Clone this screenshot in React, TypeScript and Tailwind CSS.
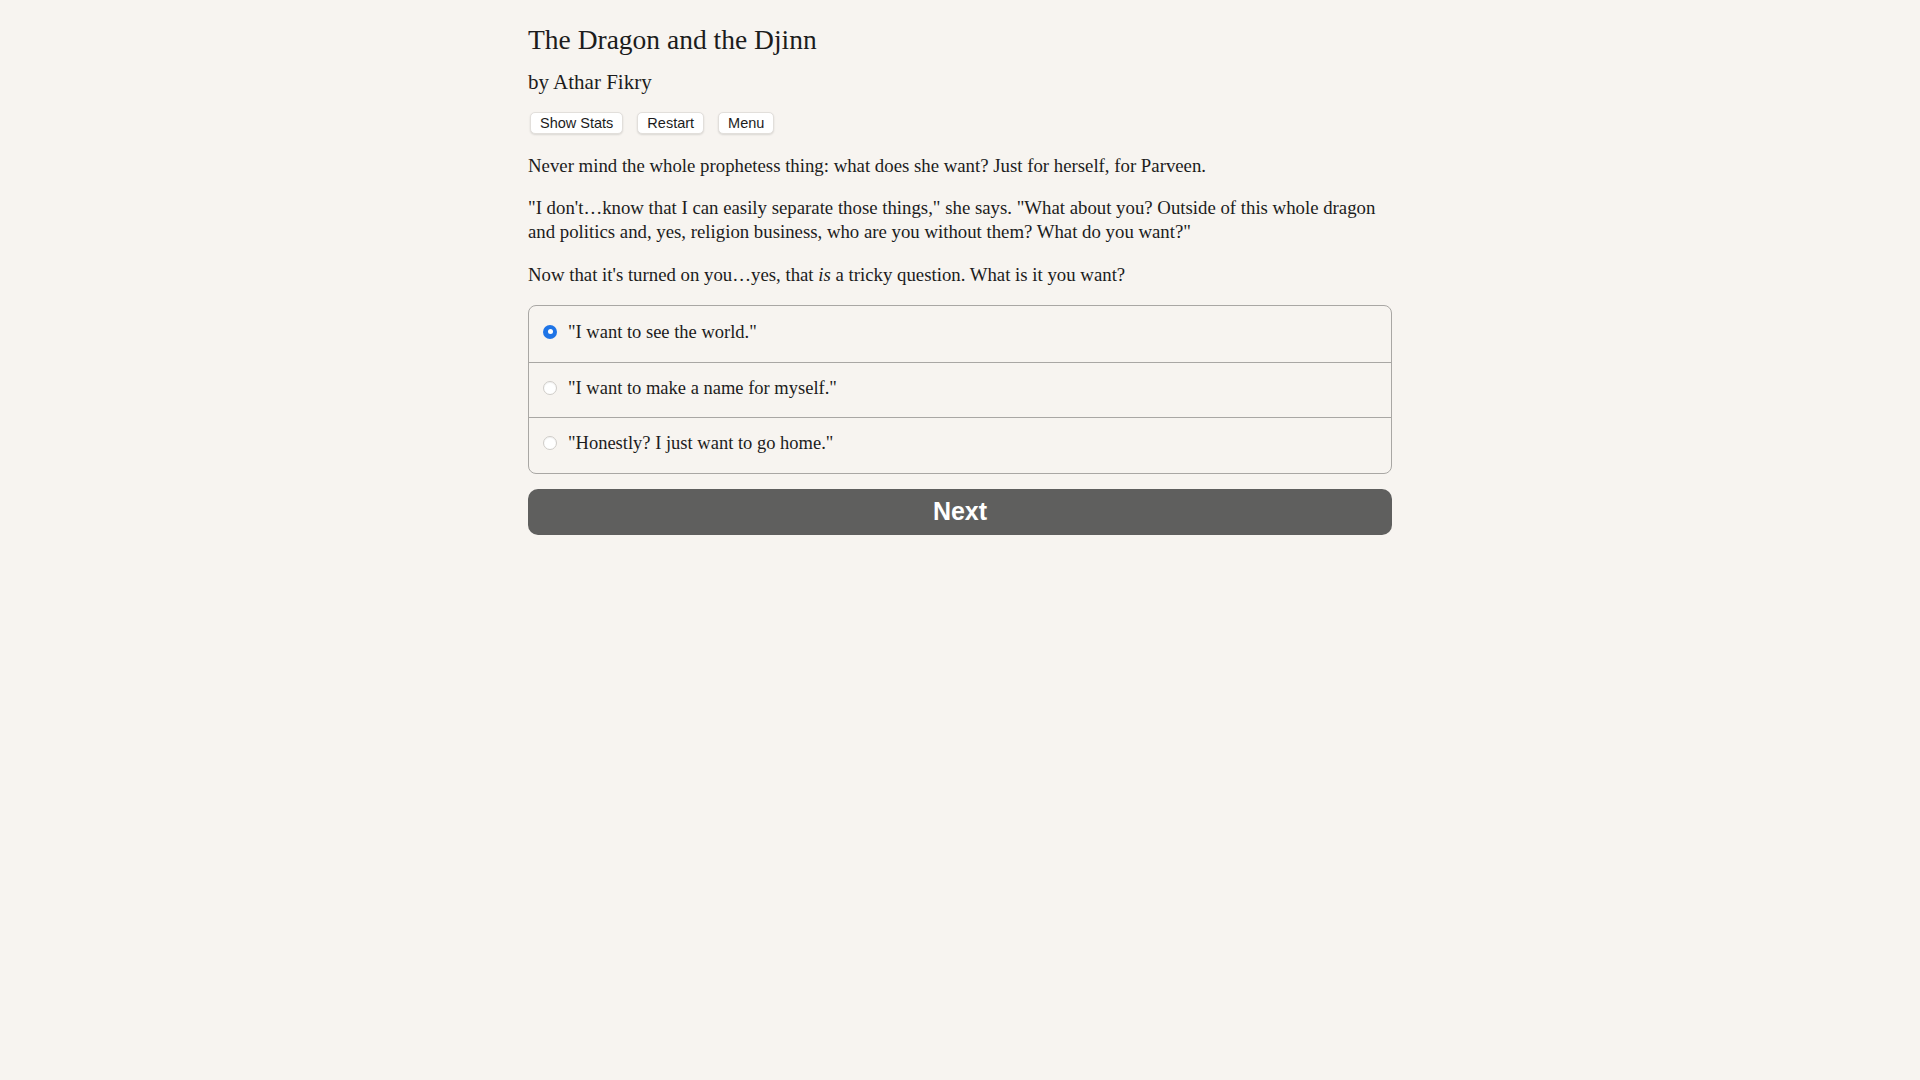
import React from "react";

const serif = "font-['Liberation_Serif',serif]";
const sans = "font-['Liberation_Sans',Arial,sans-serif]";

function Radio({ checked }: { checked: boolean }) {
  if (checked) {
    return (
      <span className="w-[14px] h-[14px] rounded-full bg-[#1f74e6] flex items-center justify-center shrink-0 -translate-y-[2px]">
        <span className="w-[5px] h-[5px] rounded-full bg-white" />
      </span>
    );
  }
  return (
    <span className="w-[14px] h-[14px] rounded-full bg-white border border-[#cfccc8] shadow-[inset_0_1px_1px_rgba(0,0,0,0.06)] shrink-0 -translate-y-[2px]" />
  );
}

export default function App() {
  const options = [
    '"I want to see the world."',
    '"I want to make a name for myself."',
    '"Honestly? I just want to go home."',
  ];
  return (
    <div className="min-h-screen w-full bg-[#f7f4f0] text-[#1c1c1c]">
      <div className={`w-[864px] mx-auto pt-[23px] ${serif}`}>
        <h1 className="text-[27.5px] leading-[33px] font-normal">The Dragon and the Djinn</h1>
        <h2 className="text-[21px] leading-[26px] font-normal mt-[13px]">by Athar Fikry</h2>
        <div className={`flex gap-[14px] mt-[17px] pl-[2px] ${sans}`}>
          {["Show Stats", "Restart", "Menu"].map((b) => (
            <button
              key={b}
              className="h-[22px] px-[9px] bg-white rounded-[5px] border border-[#e2dfdb] shadow-[0_1px_2px_rgba(0,0,0,0.12)] text-[14.5px] leading-[20px] text-[#1c1c1c]"
            >
              {b}
            </button>
          ))}
        </div>
        <div className="mt-[19.5px] flex flex-col gap-[18.5px] text-[18.8px] leading-[24px]">
          <p>Never mind the whole prophetess thing: what does she want? Just for herself, for Parveen.</p>
          <p>
            "I don't…know that I can easily separate those things," she says. "What about you? Outside of this whole
            dragon and politics and, yes, religion business, who are you without them? What do you want?"
          </p>
          <p>
            Now that it's turned on you…yes, that <i>is</i> a tricky question. What is it you want?
          </p>
        </div>
        <div className="mt-[18.5px] border border-[#a9a7a4] rounded-[8px] overflow-hidden">
          {options.map((o, i) => (
            <div
              key={o}
              className={`h-[55.5px] flex items-center pl-[14px] gap-[11px] text-[18.5px] ${
                i > 0 ? "border-t border-[#a9a7a4]" : ""
              }`}
            >
              <Radio checked={i === 0} />
              <span className="-translate-y-[1px]">{o}</span>
            </div>
          ))}
        </div>
        <button
          className={`mt-[15px] w-full h-[46px] rounded-[10px] bg-[#5f5f5e] text-white text-[25px] font-bold flex items-center justify-center ${sans}`}
        >
          Next
        </button>
      </div>
    </div>
  );
}
